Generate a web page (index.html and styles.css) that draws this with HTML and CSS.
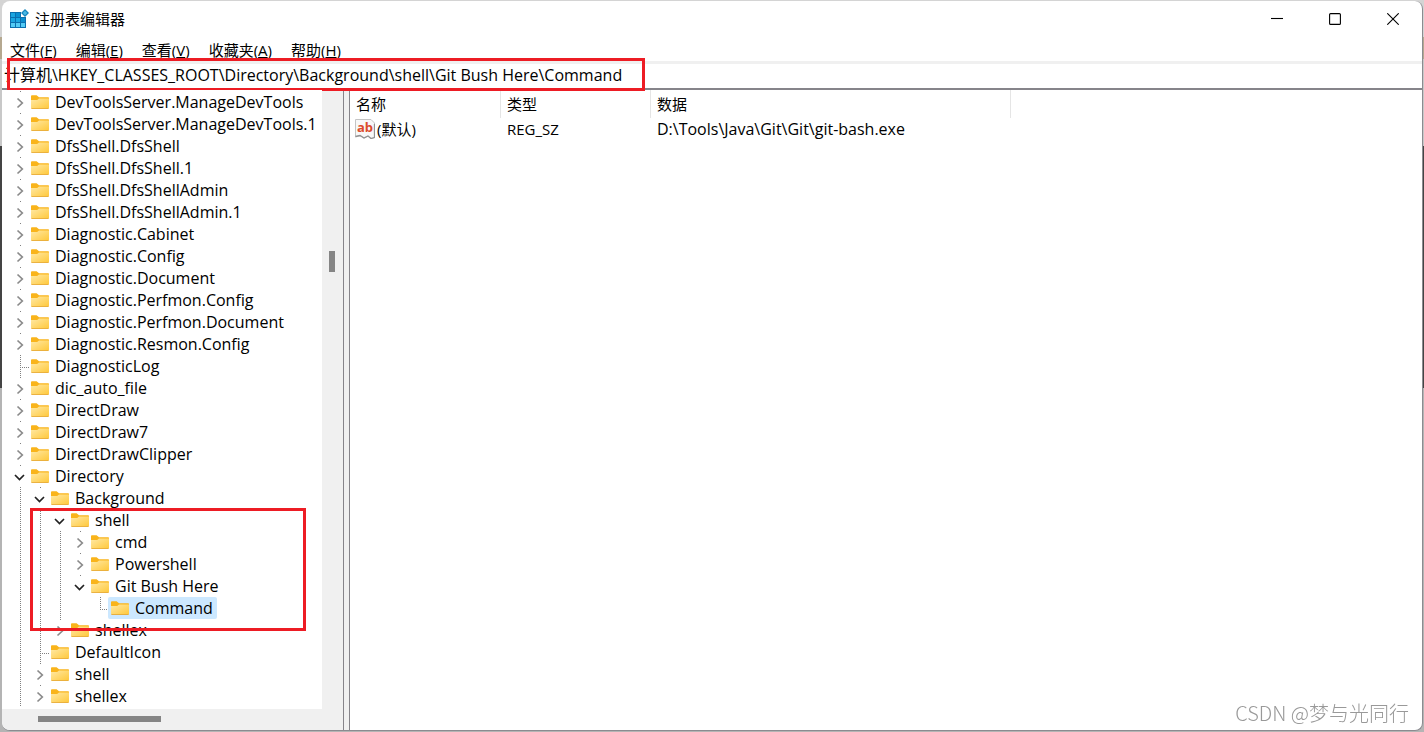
FILE: index.html
```
<!DOCTYPE html>
<html lang="zh-CN">
<head>
    <meta charset="UTF-8">
    <meta name="viewport" content="width=device-width, initial-scale=1.0">
    <title>注册表编辑器</title>
    <link rel="stylesheet" href="styles.css">
</head>
<body>
    <svg class="defs" width="0" height="0" aria-hidden="true">
        <defs>
            <linearGradient id="folder-fill" x1="0" y1="0" x2="1" y2="1">
                <stop offset="0" stop-color="#ffe9a6"/>
                <stop offset="1" stop-color="#ffc83a"/>
            </linearGradient>
            <symbol id="folder" viewBox="0 0 18 14">
                <path d="M0 1.2Q0 .3 .9 .3H5.6L8 2.3H17.2Q18 2.3 18 3.1V8H0Z" fill="#f9b41b"/>
                <path d="M0 5H6.2L8 3.4H18V12.6Q18 13.6 17 13.6H1Q0 13.6 0 12.6Z" fill="url(#folder-fill)"/>
                <path d="M0 12.4Q0 13.8 1 13.8H17Q18 13.8 18 12.4V12.9H0Z" fill="#e5a01c"/>
            </symbol>
            <symbol id="closed" viewBox="0 0 12 12">
                <path d="M3.5 1.5L8.3 6L3.5 10.5" fill="none" stroke="#8a8a8a" stroke-width="1.7"/>
            </symbol>
            <symbol id="opened" viewBox="0 0 12 12">
                <path d="M1 4L5.5 8.5L10 4" fill="none" stroke="#222" stroke-width="1.7"/>
            </symbol>
        </defs>
    </svg>

    <div class="window">
        <header class="titlebar">
            <svg class="app-icon" viewBox="0 0 20 20" width="20" height="20" aria-hidden="true">
                <rect x="1" y="3" width="16" height="16" fill="#0b6fae"/>
                <path d="M2 4h4v4H2zM2 9h4v4H2zM7 9h4v4H7z" fill="#1ba5e0"/>
                <path d="M7 4h4v4H7zM12 9h4v4h-4z" fill="#0a8ed0"/>
                <path d="M2 14h4v4H2zM7 14h4v4H7zM12 14h4v4h-4z" fill="#53cbf5"/>
                <path d="M12 2H18V8H12Z" fill="#fff"/>
                <path d="M16 0L20 4L16 8L12 4Z" fill="#1685bd"/>
                <path d="M16 1.8L18.2 4L16 6.2L13.8 4Z" fill="#48b8e5"/>
            </svg>
            <h1 class="title">注册表编辑器</h1>
            <div class="window-buttons">
                <button type="button" aria-label="最小化"><svg viewBox="0 0 12 12" width="12" height="12"><path d="M0 5.5H12"/></svg></button>
                <button type="button" aria-label="最大化"><svg viewBox="0 0 12 12" width="12" height="12"><rect x=".6" y=".6" width="10.8" height="10.8" rx="1"/></svg></button>
                <button type="button" aria-label="关闭"><svg viewBox="0 0 12 12" width="12" height="12"><path d="M.3 .3L11.7 11.7M11.7 .3L.3 11.7"/></svg></button>
            </div>
        </header>

        <nav class="menubar">
            <button type="button">文件(<u>F</u>)</button>
            <button type="button">编辑(<u>E</u>)</button>
            <button type="button">查看(<u>V</u>)</button>
            <button type="button">收藏夹(<u>A</u>)</button>
            <button type="button">帮助(<u>H</u>)</button>
        </nav>

        <div class="addressbar">
            <input type="text" aria-label="地址" value="计算机\HKEY_CLASSES_ROOT\Directory\Background\shell\Git Bush Here\Command">
            <span class="mark mark-address"></span>
        </div>

        <main class="content">
            <div class="tree-pane">
                <div class="tree-row">
                    <div class="tree-view">
                        <ul class="tree" id="tree"></ul>
                        <span class="mark mark-tree"></span>
                    </div>
                    <div class="vscroll"><span class="thumb"></span></div>
                </div>
                <div class="hscroll"><span class="thumb"></span></div>
            </div>

            <div class="splitter"></div>

            <div class="value-pane">
                <table class="values">
                    <thead>
                        <tr>
                            <th class="col-name">名称</th>
                            <th class="col-type">类型</th>
                            <th class="col-data">数据</th>
                            <th></th>
                        </tr>
                    </thead>
                    <tbody>
                        <tr>
                            <td class="name-cell">
                                <div class="value-name">
                                    <svg viewBox="0 0 20 20" width="20" height="20" aria-hidden="true">
                                        <path d="M.5 .5H16L19.5 4V18.5L16 19.5L13 17L9 19L5 16.5L.5 18Z" fill="#f8f8f8" stroke="#c4c4c4"/>
                                        <path d="M.5 17.5L5 16.5L9 19L13 17L16 19.5L19.5 18.5V5" fill="none" stroke="#929292" stroke-width="1.3"/>
                                        <text class="ab" x="2" y="13">ab</text>
                                    </svg>
                                    <span>(默认)</span>
                                </div>
                            </td>
                            <td>REG_SZ</td>
                            <td class="data-cell">D:\Tools\Java\Git\Git\git-bash.exe</td>
                            <td></td>
                        </tr>
                    </tbody>
                </table>
            </div>
        </main>
    </div>
    <div class="watermark">CSDN @梦与光同行</div>

    <script>
        // guides: one letter per ancestor column, "l" = dotted line, "-" = blank
        // state: closed, opened, leaf (line goes on below) or last
        const keys = [
            ["", "closed", "DevToolsServer.ManageDevTools"],
            ["", "closed", "DevToolsServer.ManageDevTools.1"],
            ["", "closed", "DfsShell.DfsShell"],
            ["", "closed", "DfsShell.DfsShell.1"],
            ["", "closed", "DfsShell.DfsShellAdmin"],
            ["", "closed", "DfsShell.DfsShellAdmin.1"],
            ["", "closed", "Diagnostic.Cabinet"],
            ["", "closed", "Diagnostic.Config"],
            ["", "closed", "Diagnostic.Document"],
            ["", "closed", "Diagnostic.Perfmon.Config"],
            ["", "closed", "Diagnostic.Perfmon.Document"],
            ["", "closed", "Diagnostic.Resmon.Config"],
            ["", "leaf", "DiagnosticLog"],
            ["", "closed", "dic_auto_file"],
            ["", "closed", "DirectDraw"],
            ["", "closed", "DirectDraw7"],
            ["", "closed", "DirectDrawClipper"],
            ["", "opened", "Directory"],
            ["l", "opened", "Background"],
            ["ll", "opened", "shell"],
            ["lll", "closed", "cmd"],
            ["lll", "closed", "Powershell"],
            ["lll", "opened", "Git Bush Here"],
            ["lll-", "last", "Command"],
            ["ll", "closed", "shellex"],
            ["l", "leaf", "DefaultIcon"],
            ["l", "closed", "shell"],
            ["l", "closed", "shellex"]
        ];

        const tree = document.getElementById("tree");
        keys.forEach(([guides, state, name]) => {
            let html = "";
            for (let g of guides) {
                html += `<span class="cell ${g === "l" ? "line" : ""}"></span>`;
            }
            if (state === "closed" || state === "opened") {
                html += `<button type="button" class="cell toggle" aria-label="${name}"><svg width="12" height="12"><use href="#${state}"/></svg></button>`;
            } else {
                html += `<span class="cell ${state}"></span>`;
            }
            html += `<span class="key ${name === "Command" ? "selected" : ""}"><svg width="18" height="14"><use href="#folder"/></svg>${name}</span>`;
            let item = document.createElement("li");
            item.innerHTML = html;
            tree.appendChild(item);
        });
    </script>
</body>
</html>
```
FILE: styles.css
```
* {
    box-sizing: border-box;
}
body {
    margin: 0;
    height: 100vh;
    padding: 1px 1px 1px 2px;
    background: linear-gradient(#d4d4d4 0 5%, #b5a890 5% 8%, #c8c8c8 8% 20%, #444 20% 53%, #b4b4b4 53%);
    font-family: "Open Sans", "Noto Sans CJK SC", sans-serif;
    font-size: 15px;
    line-height: 22px;
    color: #000;
}
button, input {
    font: inherit;
    color: inherit;
    background: none;
    border: none;
    padding: 0;
}
.defs {
    position: absolute;
}
.window {
    display: flex;
    flex-direction: column;
    height: 100%;
    background: #fff;
    border-right: 1px solid #8b8b90;
    border-bottom: 1px solid #8b8b90;
    border-radius: 8px;
}
.titlebar {
    display: flex;
    align-items: center;
    height: 35px;
    padding-left: 7px;
    flex: none;
}
.title {
    flex: 1;
    margin: 0 0 0 6px;
    font-size: 15px;
    font-weight: normal;
}
.window-buttons {
    display: flex;
}
.window-buttons button {
    width: 58px;
    height: 35px;
}
.window-buttons svg {
    display: block;
    margin: 0 auto;
    fill: none;
    stroke: #000;
    stroke-width: 1.1;
}
.menubar {
    display: flex;
    gap: 19px;
    flex: none;
    height: 25px;
    padding: 2px 0 0 8px;
}
.menubar u {
    text-decoration-thickness: 1px;
    text-underline-offset: 1px;
}
.addressbar {
    position: relative;
    flex: none;
    height: 27px;
    border-top: 3px solid #f0f0f0;
}
.addressbar input {
    display: block;
    width: 100%;
    height: 22px;
    padding-left: 2px;
    font-size: 16px;
    outline: none;
}
.content {
    display: flex;
    flex: 1;
    min-height: 0;
    border-top: 2px solid #86848a;
}
.tree-pane {
    display: flex;
    flex-direction: column;
    width: 342px;
    flex: none;
    background: #f0f0f0;
    border-right: 1px solid #86848a;
    border-bottom-left-radius: 8px;
}
.tree-row {
    display: flex;
    flex: 1;
    min-height: 0;
}
.tree-view {
    position: relative;
    flex: 1;
    background: #fff;
}
.tree {
    height: 100%;
    margin: 0;
    padding: 1px 0 0 8px;
    overflow: hidden;
    list-style: none;
    font-size: 16px;
}
.tree li {
    display: flex;
    height: 22px;
    white-space: nowrap;
}
.cell {
    flex: none;
    width: 20px;
    height: 22px;
}
.line, .leaf, .last {
    background: repeating-linear-gradient(#808080 0 1px, transparent 1px 2px) 10px 0 / 1px 22px no-repeat;
}
.leaf {
    background:
        repeating-linear-gradient(#808080 0 1px, transparent 1px 2px) 10px 0 / 1px 22px no-repeat,
        repeating-linear-gradient(90deg, #808080 0 1px, transparent 1px 2px) 10px 12px / 10px 1px no-repeat;
}
.last {
    background:
        repeating-linear-gradient(#808080 0 1px, transparent 1px 2px) 10px 0 / 1px 12px no-repeat,
        repeating-linear-gradient(90deg, #808080 0 1px, transparent 1px 2px) 10px 12px / 10px 1px no-repeat;
}
.toggle {
    background: linear-gradient(#808080, #808080) 10px 0 / 1px 1px no-repeat;
}
.toggle svg {
    display: block;
    margin: 2px auto 0;
}
.key {
    display: flex;
    align-items: center;
    gap: 6px;
    margin-left: -2px;
    padding: 0 4px 0 3px;
    border-radius: 2px;
}
.key svg {
    margin-bottom: 1px;
}
.selected {
    background: #cce8ff;
}
.vscroll {
    width: 21px;
    padding: 161px 0 0 7px;
}
.vscroll .thumb {
    display: block;
    width: 6px;
    height: 21px;
    background: #858585;
}
.hscroll {
    height: 21px;
    padding: 7px 0 0 36px;
}
.hscroll .thumb {
    display: block;
    width: 123px;
    height: 6px;
    background: #858585;
}
.splitter {
    flex: none;
    width: 6px;
    background: #f0f0f0;
    border-right: 1px solid #86848a;
}
.value-pane {
    flex: 1;
    min-width: 0;
}
.values {
    width: 100%;
    table-layout: fixed;
    border-collapse: separate;
    border-spacing: 0;
}
.values th {
    height: 28px;
    padding: 0 0 0 6px;
    font-weight: normal;
    text-align: left;
    border-right: 1px solid #e5e5e5;
}
.values th:last-child {
    border-right: none;
}
.values td {
    height: 22px;
    padding: 0 0 0 6px;
}
.values .name-cell {
    padding-left: 5px;
}
.values .data-cell {
    font-size: 16px;
}
.col-name {
    width: 151px;
}
.col-type {
    width: 150px;
}
.col-data {
    width: 360px;
}
.value-name {
    display: flex;
    align-items: center;
    gap: 2px;
}
.ab {
    font: bold 13px "Open Sans", sans-serif;
    fill: #dc4b2b;
}
/* red frames round the path and the new keys */
.mark {
    position: absolute;
    border: 3px solid #ed1c24;
    pointer-events: none;
}
.mark-address {
    left: 5px;
    top: -6px;
    width: 638px;
    height: 33px;
}
.mark-tree {
    left: 28px;
    top: 418px;
    width: 276px;
    height: 123px;
}
.watermark {
    position: fixed;
    right: 15px;
    bottom: 6px;
    font-family: "Noto Sans CJK SC", sans-serif;
    font-size: 20px;
    font-weight: 300;
    line-height: 26px;
    color: #999;
}
```
